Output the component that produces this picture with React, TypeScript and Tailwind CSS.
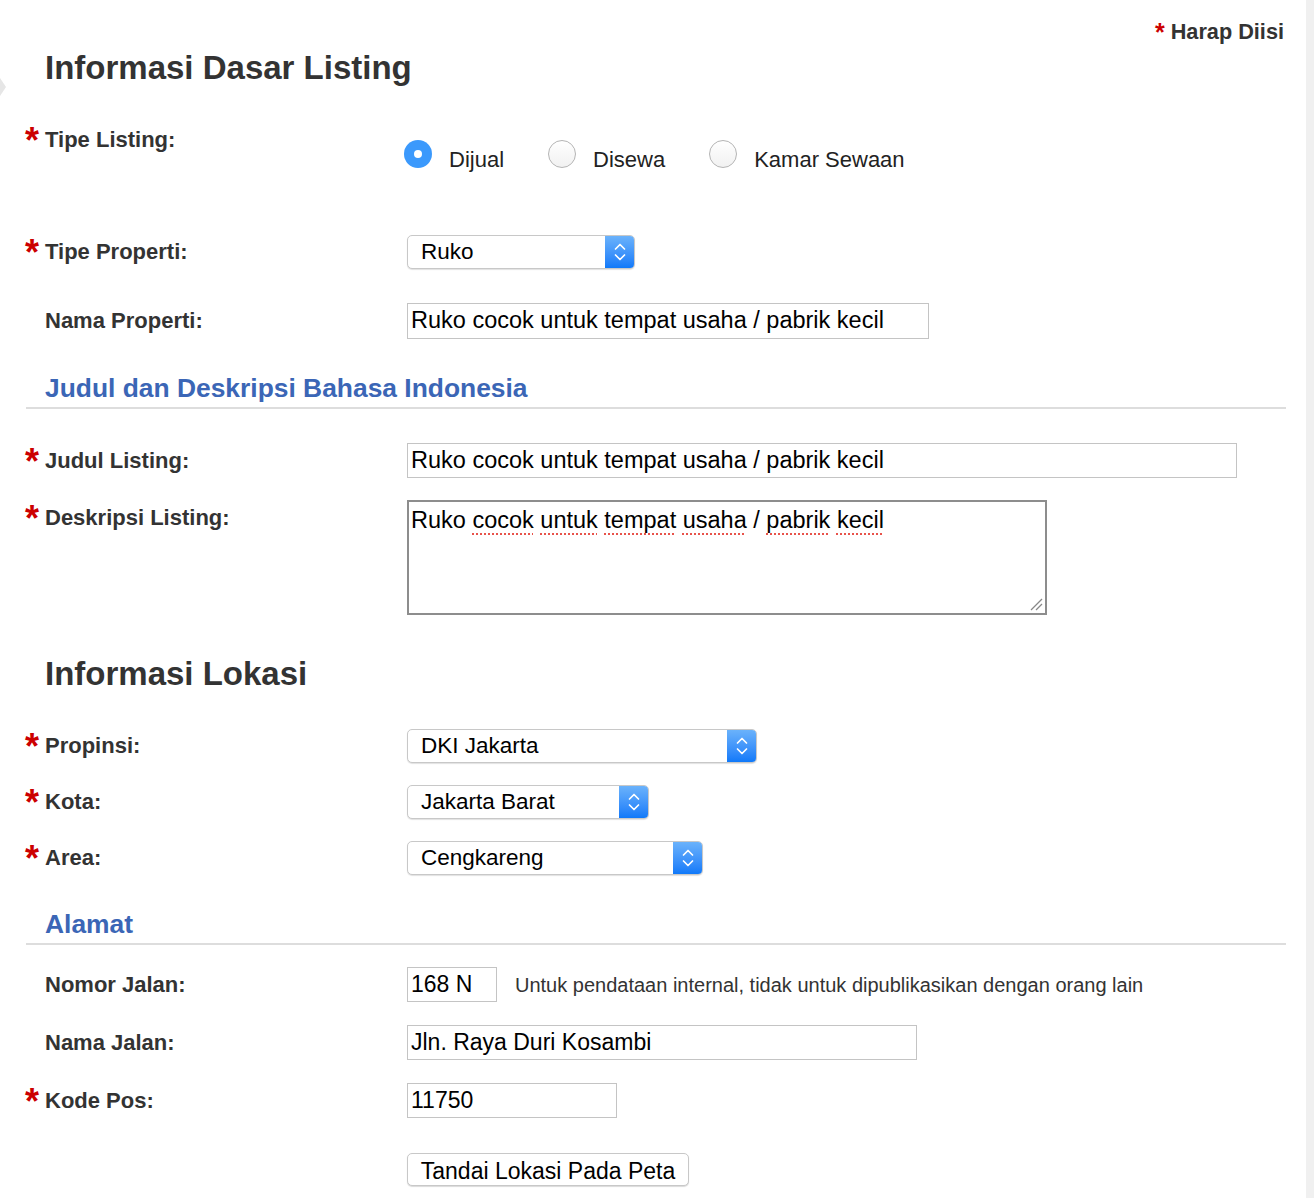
import { ReactNode } from 'react'

function Star({ big = true }: { big?: boolean }) {
  return big ? (
    <span className="relative -left-[1px] top-[1px] w-[19px] shrink-0 text-[36px] font-bold leading-none text-[#cc0000]">*</span>
  ) : (
    <span className="text-[25px] font-bold text-[#cc0000]">*</span>
  )
}

function Label({ required, h, children }: { required?: boolean; h: string; children: ReactNode }) {
  return (
    <div className={`flex w-[381px] shrink-0 items-center ${h}`}>
      {required ? <Star /> : <span className="w-[19px] shrink-0" />}
      <span className="text-[22px] font-bold leading-[28px] text-[#333]">{children}</span>
    </div>
  )
}

function Radio({ checked, label, last }: { checked?: boolean; label: string; last?: boolean }) {
  return (
    <div className={`flex items-start ${last ? '' : 'mr-[44px]'}`}>
      {checked ? (
        <span className="mt-[2px] flex h-[28px] w-[28px] items-center justify-center rounded-full bg-[#3b99fc]">
          <span className="h-[8px] w-[8px] rounded-full bg-white" />
        </span>
      ) : (
        <span className="mt-[2px] h-[28px] w-[28px] rounded-full border border-[#b4b4b4] bg-linear-to-b from-white to-[#f1f1f1]" />
      )}
      <span className="ml-[17px] mt-[8px] text-[22px] leading-[28px] text-[#222]">{label}</span>
    </div>
  )
}

function Chevrons() {
  return (
    <svg width="14" height="24" viewBox="0 0 14 24" fill="none" stroke="white" strokeWidth="1.7" strokeLinecap="round" strokeLinejoin="round">
      <path d="M2.5 9 L7 4.5 L11.5 9" />
      <path d="M2.5 15 L7 19.5 L11.5 15" />
    </svg>
  )
}

function Select({ w, value }: { w: string; value: string }) {
  return (
    <div className={`flex h-[34px] ${w} overflow-hidden rounded-[5px] border border-[#c8c8c8] bg-white shadow-[0_1px_1px_rgba(0,0,0,0.12)]`}>
      <div className="flex flex-1 items-center pl-[13px] text-[22.5px] text-black">{value}</div>
      <div className="flex w-[29px] items-center justify-center bg-linear-to-b from-[#6ab2fb] to-[#0e79f9]">
        <Chevrons />
      </div>
    </div>
  )
}

function Input({ w, h = 'h-[35px]', size = 'text-[23px]', value }: { w: string; h?: string; size?: string; value: string }) {
  return (
    <div className={`flex ${h} ${w} items-center border border-[#c4c4c4] bg-white pl-[3px] ${size} text-black`}>
      {value}
    </div>
  )
}

function Heading({ children, mt }: { children: ReactNode; mt: string }) {
  return <h1 className={`${mt} pl-[19px] text-[33px] font-bold leading-[40px] text-[#333]`}>{children}</h1>
}

function SubHeading({ children, mt }: { children: ReactNode; mt: string }) {
  return (
    <h2 className={`${mt} border-b-2 border-[#dddddd] pb-[3px] pl-[19px] text-[26.4px] font-bold leading-[32px] text-[#3b66b6]`}>
      {children}
    </h2>
  )
}

const squiggle = 'underline decoration-dotted decoration-[#e8534b] decoration-2 underline-offset-[5px]'

export default function App() {
  return (
    <div className="flex min-h-[1198px] font-['Liberation_Sans',Arial,sans-serif]">
      <div className="relative w-[1306px] bg-white pb-[12px] pl-[26px] pr-[20px]">
        <div className="absolute left-0 top-[78px] h-0 w-0 border-y-[9px] border-l-[6px] border-y-transparent border-l-[#e6e6e6]" />

        <div className="flex justify-end pr-[2px] pt-[20px] text-[21.7px] font-bold leading-[24px] text-[#333]">
          <Star big={false} />
          <span className="ml-[6px]">Harap Diisi</span>
        </div>

        <Heading mt="mt-[4px]">Informasi Dasar Listing</Heading>

        {/* Tipe Listing */}
        <div className="mt-[38px] flex items-start">
          <Label required h="h-[28px]">Tipe Listing:</Label>
          <div className="-ml-[3px] mt-[12px] flex">
            <Radio checked label="Dijual" />
            <Radio label="Disewa" />
            <Radio label="Kamar Sewaan" last />
          </div>
        </div>

        <div className="mt-[61px] flex items-start">
          <Label required h="h-[34px]">Tipe Properti:</Label>
          <Select w="w-[228px]" value="Ruko" />
        </div>

        <div className="mt-[34px] flex items-start">
          <Label h="h-[36px]">Nama Properti:</Label>
          <Input w="w-[522px]" h="h-[36px]" size="text-[23.5px]" value="Ruko cocok untuk tempat usaha / pabrik kecil" />
        </div>

        <SubHeading mt="mt-[33px]">Judul dan Deskripsi Bahasa Indonesia</SubHeading>

        <div className="mt-[34px] flex items-start">
          <Label required h="h-[35px]">Judul Listing:</Label>
          <Input w="w-[830px]" size="text-[23.5px]" value="Ruko cocok untuk tempat usaha / pabrik kecil" />
        </div>

        <div className="mt-[22px] flex items-start">
          <Label required h="h-[36px]">Deskripsi Listing:</Label>
          <div className="relative h-[115px] w-[640px] border-2 border-[#8d8d8d] bg-white pl-[2px] pt-[4px] text-[23.5px] leading-[28px] text-black">
            Ruko <span className={squiggle}>cocok</span> <span className={squiggle}>untuk</span>{' '}
            <span className={squiggle}>tempat</span> <span className={squiggle}>usaha</span> /{' '}
            <span className={squiggle}>pabrik</span> <span className={squiggle}>kecil</span>
            <svg className="absolute bottom-[2px] right-[2px]" width="14" height="14" viewBox="0 0 14 14" stroke="#888" strokeWidth="1.2">
              <path d="M2 13 L13 2" />
              <path d="M7 13 L13 7" />
            </svg>
          </div>
        </div>

        <Heading mt="mt-[39px]">Informasi Lokasi</Heading>

        <div className="mt-[35px] flex items-start">
          <Label required h="h-[34px]">Propinsi:</Label>
          <Select w="w-[350px]" value="DKI Jakarta" />
        </div>
        <div className="mt-[22px] flex items-start">
          <Label required h="h-[34px]">Kota:</Label>
          <Select w="w-[242px]" value="Jakarta Barat" />
        </div>
        <div className="mt-[22px] flex items-start">
          <Label required h="h-[34px]">Area:</Label>
          <Select w="w-[296px]" value="Cengkareng" />
        </div>

        <SubHeading mt="mt-[33px]">Alamat</SubHeading>

        <div className="mt-[22px] flex items-start">
          <Label h="h-[35px]">Nomor Jalan:</Label>
          <Input w="w-[90px]" value="168 N" />
          <span className="ml-[18px] flex h-[35px] items-center text-[20px] text-[#333]">
            Untuk pendataan internal, tidak untuk dipublikasikan dengan orang lain
          </span>
        </div>
        <div className="mt-[23px] flex items-start">
          <Label h="h-[35px]">Nama Jalan:</Label>
          <Input w="w-[510px]" value="Jln. Raya Duri Kosambi" />
        </div>
        <div className="mt-[23px] flex items-start">
          <Label required h="h-[35px]">Kode Pos:</Label>
          <Input w="w-[210px]" value="11750" />
        </div>

        <div className="mt-[35px] pl-[381px]">
          <button className="h-[33px] w-[282px] rounded-[5px] border border-[#c8c8c8] bg-white text-[23px] text-black shadow-[0_1px_1px_rgba(0,0,0,0.15)]">
            Tandai Lokasi Pada Peta
          </button>
        </div>
      </div>
      <div className="flex-1 bg-[#f0f0f0]" />
    </div>
  )
}
